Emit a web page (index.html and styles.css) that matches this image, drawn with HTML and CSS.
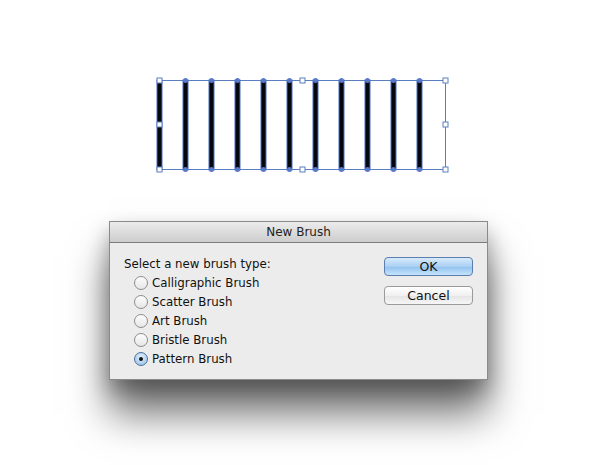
FILE: index.html
```
<!DOCTYPE html>
<html>
<head>
	<meta charset="utf-8">
	<title>New Brush</title>
	<link rel="stylesheet" href="styles.css">
</head>
<body>
	<div class="page">
		<!-- 选中的图案 -->
		<svg class="art" width="305" height="110" viewBox="0 0 305 110">
			<rect class="bbox" x="9.5" y="10.5" width="286" height="89"></rect>
			<g class="bars">
				<rect x="7" y="10" width="5" height="90"></rect>
				<rect x="33" y="10" width="5" height="90"></rect>
				<rect x="59" y="10" width="5" height="90"></rect>
				<rect x="85" y="10" width="5" height="90"></rect>
				<rect x="111" y="10" width="5" height="90"></rect>
				<rect x="137" y="10" width="5" height="90"></rect>
				<rect x="163" y="10" width="5" height="90"></rect>
				<rect x="189" y="10" width="5" height="90"></rect>
				<rect x="215" y="10" width="5" height="90"></rect>
				<rect x="241" y="10" width="5" height="90"></rect>
				<rect x="267" y="10" width="5" height="90"></rect>
			</g>
			<g class="dots">
				<circle cx="35.5" cy="10.5" r="2.5"></circle><circle cx="35.5" cy="99.5" r="2.5"></circle>
				<circle cx="61.5" cy="10.5" r="2.5"></circle><circle cx="61.5" cy="99.5" r="2.5"></circle>
				<circle cx="87.5" cy="10.5" r="2.5"></circle><circle cx="87.5" cy="99.5" r="2.5"></circle>
				<circle cx="113.5" cy="10.5" r="2.5"></circle><circle cx="113.5" cy="99.5" r="2.5"></circle>
				<circle cx="139.5" cy="10.5" r="2.5"></circle><circle cx="139.5" cy="99.5" r="2.5"></circle>
				<circle cx="165.5" cy="10.5" r="2.5"></circle><circle cx="165.5" cy="99.5" r="2.5"></circle>
				<circle cx="191.5" cy="10.5" r="2.5"></circle><circle cx="191.5" cy="99.5" r="2.5"></circle>
				<circle cx="217.5" cy="10.5" r="2.5"></circle><circle cx="217.5" cy="99.5" r="2.5"></circle>
				<circle cx="243.5" cy="10.5" r="2.5"></circle><circle cx="243.5" cy="99.5" r="2.5"></circle>
				<circle cx="269.5" cy="10.5" r="2.5"></circle><circle cx="269.5" cy="99.5" r="2.5"></circle>
			</g>
			<g class="handles">
				<rect x="7" y="8" width="5" height="5"></rect>
				<rect x="150" y="8" width="5" height="5"></rect>
				<rect x="293" y="8" width="5" height="5"></rect>
				<rect x="7" y="52" width="5" height="5"></rect>
				<rect x="293" y="52" width="5" height="5"></rect>
				<rect x="7" y="97" width="5" height="5"></rect>
				<rect x="150" y="97" width="5" height="5"></rect>
				<rect x="293" y="97" width="5" height="5"></rect>
			</g>
		</svg>

		<div class="dialog">
			<div class="title_bar">New Brush</div>
			<div class="dialog_body">
				<div class="options">
					<p class="prompt">Select a new brush type:</p>
					<ul class="radio_list">
						<li><span class="radio"></span>Calligraphic Brush</li>
						<li><span class="radio"></span>Scatter Brush</li>
						<li><span class="radio"></span>Art Brush</li>
						<li><span class="radio"></span>Bristle Brush</li>
						<li><span class="radio checked"></span>Pattern Brush</li>
					</ul>
				</div>
				<div class="buttons">
					<button class="btn btn_ok">OK</button>
					<button class="btn">Cancel</button>
				</div>
			</div>
		</div>
	</div>
</body>
</html>
```

FILE: styles.css
```
*{margin: 0; padding: 0; box-sizing: border-box;}
ul,li{list-style: none;}
body{background: #fff; font-family: "DejaVu Sans", "Liberation Sans", sans-serif; color: #111;}
.page{padding-top: 70px; height: 465px; overflow: hidden;}

/* 图案 */
.art{display: block; margin-left: 150px;}
.art .bbox{fill: none; stroke: #5a7fc0; stroke-width: 1;}
.art .bars rect{fill: #05070f; stroke: #4a6cc0; stroke-width: 1;}
.art .dots circle{fill: #5878c8;}
.art .handles rect{fill: #fff; stroke: #5a7fc0; stroke-width: 1;}

/* 对话框 */
.dialog{width: 379px; margin: 41px 0 0 109px; border: 1px solid #8a8a8a;
	box-shadow: 0 34px 38px rgba(0,0,0,.55), 0 10px 20px rgba(0,0,0,.3);}
.title_bar{height: 21px; line-height: 21px; text-align: center; font-size: 12px; color: #222;
	background: linear-gradient(#ebebeb, #cdcdcd); border-bottom: 1px solid #7c7c7c;}
.dialog_body{background: #ececec; height: 136px; display: flex; justify-content: space-between;
	padding: 13px 14px 0 14px;}
.prompt{font-size: 11.8px; line-height: 16px; margin-bottom: 1px;}
.radio_list{padding-left: 10px;}
.radio_list li{display: flex; align-items: center; height: 19px; font-size: 11.8px;}
.radio{width: 14px; height: 14px; border-radius: 50%; margin-right: 4px;
	border: 1px solid #8c8c8c; background: linear-gradient(#fdfdfd, #e6e6e6);
	display: flex; align-items: center; justify-content: center;}
.radio.checked{border-color: #4f6f9e; background: radial-gradient(circle at 50% 35%, #e3f0fb, #8ebde8);}
.radio.checked::after{content: ""; width: 4px; height: 4px; border-radius: 50%; background: #111;}

.buttons{display: flex; flex-direction: column; gap: 10px; padding-top: 1px;}
.btn{width: 89px; height: 19px; border-radius: 4px; font: 12.5px "DejaVu Sans", sans-serif; color: #111;
	border: 1px solid #9a9a9a; background: linear-gradient(#ffffff, #f0f0f0 50%, #e4e4e4 51%, #f6f6f6);}
.btn_ok{border-color: #5c7eae; background: linear-gradient(#d8eafa, #a9d0f3 50%, #8fc1ef 51%, #c6e3fb);}
```
